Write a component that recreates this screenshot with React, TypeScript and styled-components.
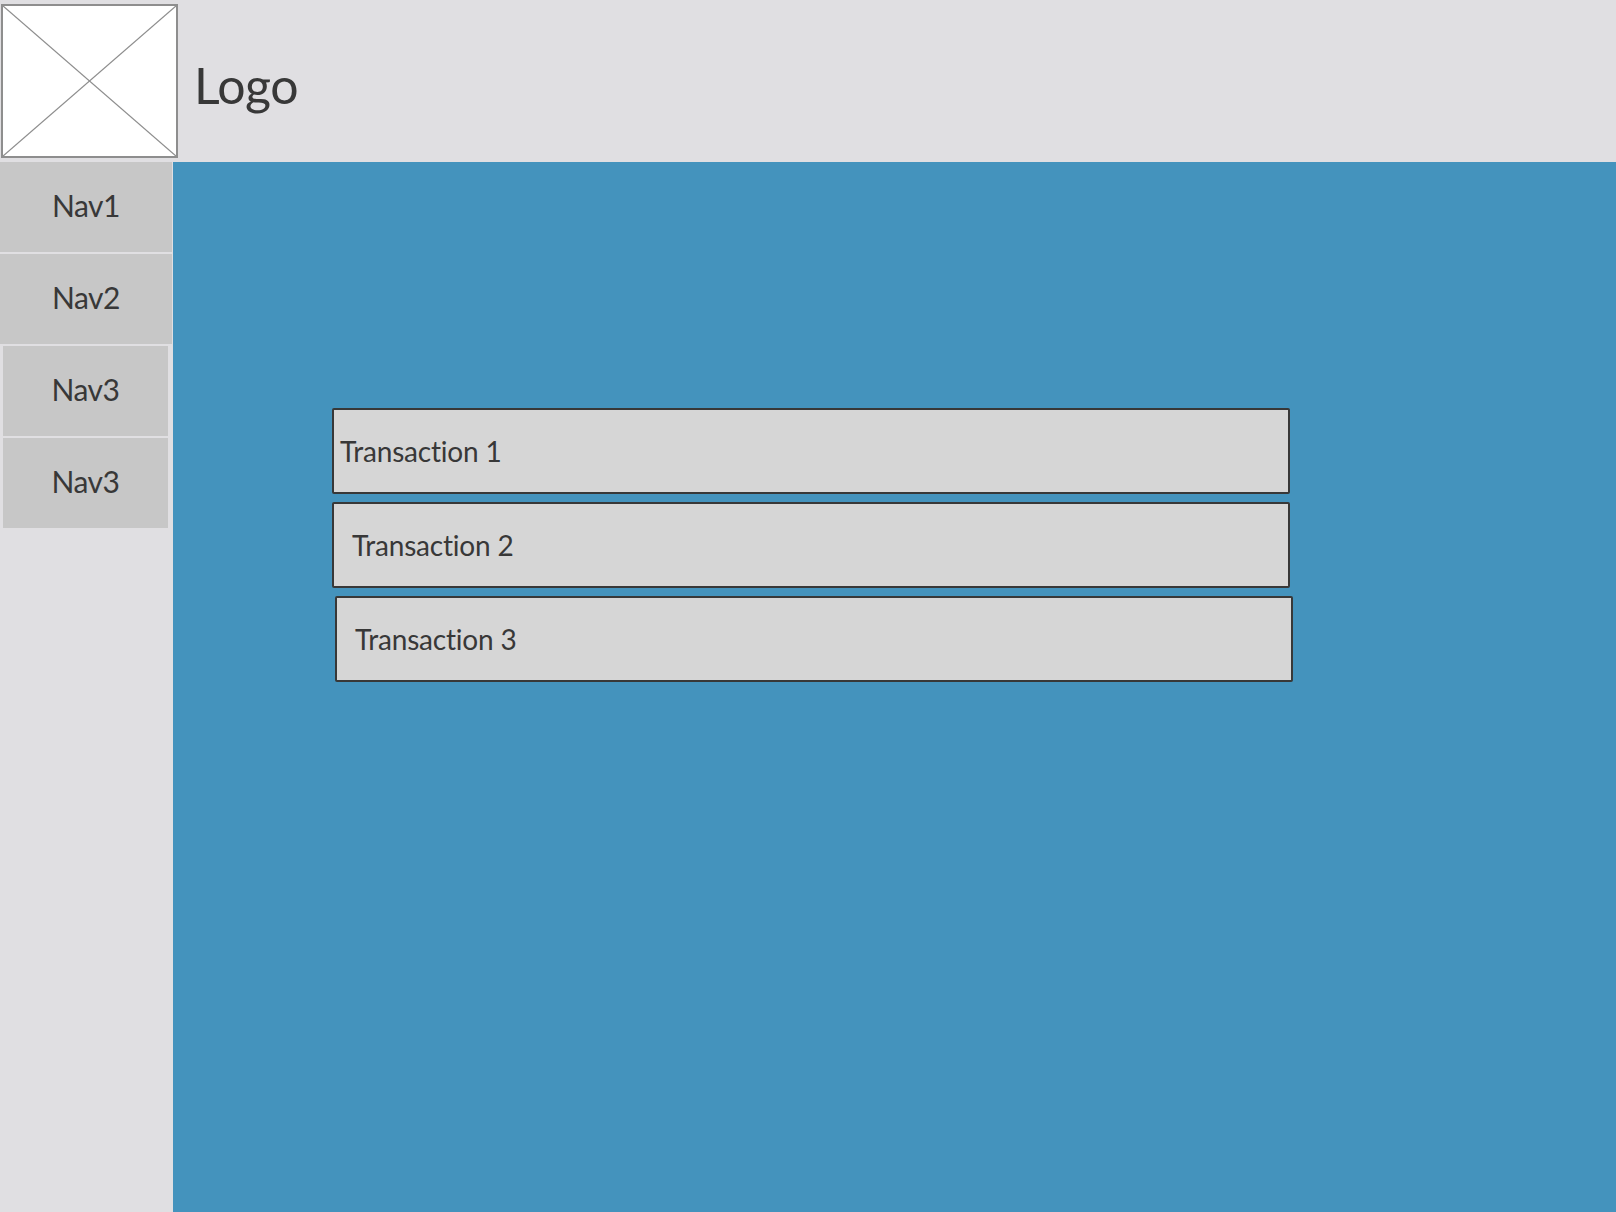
import React from "react";
import styled, { createGlobalStyle } from "styled-components";

const GlobalStyle = createGlobalStyle`
  html, body { margin: 0; padding: 0; }
  body { font-family: Lato, "Open Sans", sans-serif; background: #e0dfe2; }
  * { box-sizing: border-box; }
`;

const Page = styled.div`
  display: flex;
  flex-direction: column;
  width: 100%;
  height: 100vh;
  min-height: 1212px;
`;

const Header = styled.header`
  display: flex;
  align-items: center;
  gap: 16px;
  height: 162px;
  padding: 4px 0 4px 1px;
  background: #e0dfe2;
  flex-shrink: 0;
`;

const LogoBox = styled.div`
  width: 177px;
  height: 154px;
  background: #ffffff;
  border: 2px solid #8e8e8e;
  flex-shrink: 0;
  svg { display: block; width: 100%; height: 100%; }
`;

const LogoText = styled.h1`
  margin: 8px 0 0 0;
  font-family: Lato, sans-serif;
  font-weight: 400;
  font-size: 50px;
  color: #383838;
  letter-spacing: -0.5px;
`;

const Body = styled.div`
  display: flex;
  flex: 1;
`;

const Sidebar = styled.nav`
  display: flex;
  flex-direction: column;
  gap: 2px;
  width: 173px;
  background: #e0dfe2;
  flex-shrink: 0;
`;

const NavItem = styled.div<{ $inset?: boolean }>`
  display: flex;
  align-items: center;
  justify-content: center;
  height: 90px;
  margin: 0 ${(p) => (p.$inset ? "5px 0 3px" : "1px 0 0")};
  padding-bottom: 4px;
  background: #c7c7c7;
  font-family: Lato, sans-serif;
  font-size: 30px;
  color: #383838;
  letter-spacing: -0.5px;
`;

const Main = styled.main`
  flex: 1;
  background: #4493bd;
  padding: 246px 0 0 159px;
  display: flex;
  flex-direction: column;
  gap: 8px;
`;

const Row = styled.div<{ $shift: number; $pad: number }>`
  display: flex;
  align-items: center;
  width: 958px;
  height: 86px;
  margin-left: ${(p) => p.$shift}px;
  padding-left: ${(p) => p.$pad}px;
  background: #d6d6d6;
  border: 2px solid #383838;
  border-radius: 2px;
  font-family: Lato, sans-serif;
  font-size: 28px;
  color: #383838;
  letter-spacing: -0.2px;
`;

const navs = [
  { label: "Nav1", inset: false },
  { label: "Nav2", inset: false },
  { label: "Nav3", inset: true },
  { label: "Nav3", inset: true },
];

const rows = [
  { label: "Transaction 1", shift: 0, pad: 6 },
  { label: "Transaction 2", shift: 0, pad: 18 },
  { label: "Transaction 3", shift: 3, pad: 18 },
];

export default function App() {
  return (
    <>
      <GlobalStyle />
      <Page>
        <Header>
          <LogoBox>
            <svg viewBox="0 0 100 100" preserveAspectRatio="none">
              <line x1="0" y1="0" x2="100" y2="100" stroke="#8e8e8e" strokeWidth="1.3" vectorEffect="non-scaling-stroke" />
              <line x1="100" y1="0" x2="0" y2="100" stroke="#8e8e8e" strokeWidth="1.3" vectorEffect="non-scaling-stroke" />
            </svg>
          </LogoBox>
          <LogoText>Logo</LogoText>
        </Header>
        <Body>
          <Sidebar>
            {navs.map((n, i) => (
              <NavItem key={i} $inset={n.inset}>
                {n.label}
              </NavItem>
            ))}
          </Sidebar>
          <Main>
            {rows.map((r) => (
              <Row key={r.label} $shift={r.shift} $pad={r.pad}>
                {r.label}
              </Row>
            ))}
          </Main>
        </Body>
      </Page>
    </>
  );
}
